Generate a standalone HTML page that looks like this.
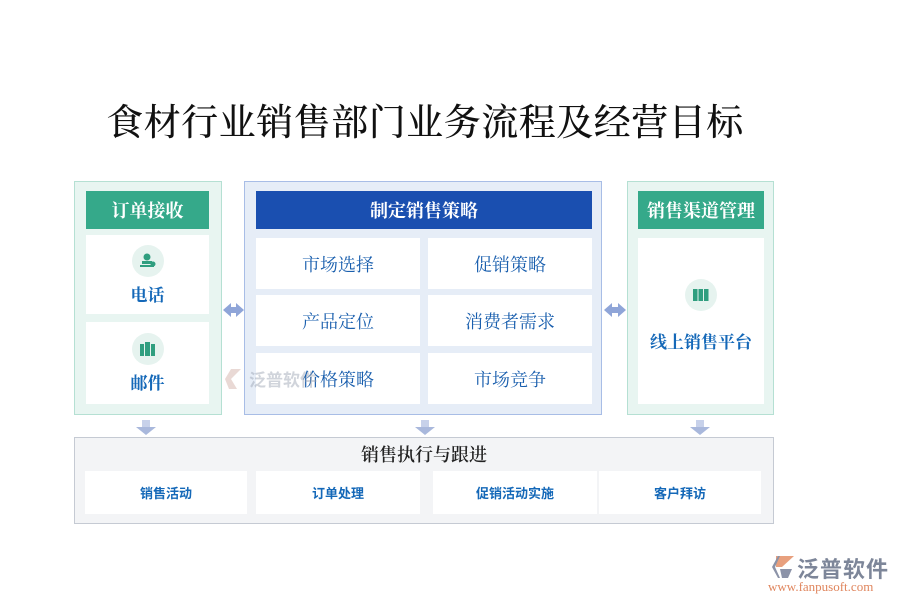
<!DOCTYPE html>
<html><head><meta charset="utf-8"><style>
*{margin:0;padding:0;box-sizing:border-box}
body{width:900px;height:600px;background:#fff;position:relative;font-family:"Liberation Sans","Noto Sans CJK SC",sans-serif;overflow:hidden}
.a{position:absolute}
.title{left:0;width:850px;top:92px;text-align:center;font-family:"Liberation Serif","Noto Serif CJK SC",serif;font-size:37px;color:#111;letter-spacing:0.5px;font-weight:500}
.gbox{background:#e8f5f1;border:1.5px solid #b5e0d3}
.bbox{background:#e6edf7;border:1.5px solid #a8bde6}
.gh{background:#35a98a;color:#fff;font-size:18px;font-weight:bold;display:flex;align-items:center;justify-content:center;font-family:"Liberation Serif","Noto Serif CJK SC",serif}
.bh{background:#1a4fb0;color:#fff;font-size:18px;font-weight:bold;display:flex;align-items:center;justify-content:center;font-family:"Liberation Serif","Noto Serif CJK SC",serif}
.card{background:#fff}
.cell{background:#fff;display:flex;align-items:center;justify-content:center;color:#1a5fae;font-size:18px;font-family:"Liberation Serif","Noto Serif CJK SC",serif}
.lbl{color:#1468b8;font-size:17px;font-weight:bold;text-align:center;width:100%;font-family:"Liberation Serif","Noto Serif CJK SC",serif}
.ic{width:32px;height:32px;border-radius:50%;background:#e6f3ef;left:50%;margin-left:-16px}
.bc{background:#fff;display:flex;align-items:center;justify-content:center;color:#1468b8;font-size:13px;font-weight:bold}
.dn{width:0;height:0;border-left:10px solid transparent;border-right:10px solid transparent;border-top:8px solid #a9b8dc}
.dns{width:8px;height:7px;background:#c7d1ea}
</style></head><body>
<div class="a title">食材行业销售部门业务流程及经营目标</div>

<div class="a gbox" style="left:74px;top:181px;width:148px;height:234px"></div>
<div class="a gh" style="left:86px;top:191px;width:123px;height:38px">订单接收</div>
<div class="a card" style="left:86px;top:235px;width:123px;height:79px"></div>
<div class="a ic" style="left:148px;top:245px"></div>
<svg class="a" style="left:138px;top:252px" width="20" height="18"><circle cx="9" cy="5" r="3.5" fill="#2f9e7f"/><rect x="4" y="9" width="10" height="3" fill="#2f9e7f"/><rect x="2" y="13" width="14" height="2" fill="#2f9e7f"/><circle cx="15" cy="12" r="2.5" fill="#2f9e7f"/></svg>
<div class="a lbl" style="left:86px;top:281px;width:123px">电话</div>
<div class="a card" style="left:86px;top:322px;width:123px;height:82px"></div>
<div class="a ic" style="left:148px;top:333px"></div>
<svg class="a" style="left:138px;top:340px" width="20" height="18"><rect x="2" y="4" width="4" height="12" fill="#2f9e7f"/><rect x="7" y="2" width="5" height="14" fill="#2f9e7f"/><rect x="13" y="4" width="4" height="12" fill="#2f9e7f"/></svg>
<div class="a lbl" style="left:86px;top:369px;width:123px">邮件</div>

<div class="a bbox" style="left:244px;top:181px;width:358px;height:234px"></div>
<div class="a bh" style="left:256px;top:191px;width:336px;height:38px">制定销售策略</div>
<div class="a cell" style="left:256px;top:238px;width:164px;height:51px">市场选择</div>
<div class="a cell" style="left:428px;top:238px;width:164px;height:51px">促销策略</div>
<div class="a cell" style="left:256px;top:295px;width:164px;height:51px">产品定位</div>
<div class="a cell" style="left:428px;top:295px;width:164px;height:51px">消费者需求</div>
<div class="a cell" style="left:256px;top:353px;width:164px;height:51px">价格策略</div>
<div class="a cell" style="left:428px;top:353px;width:164px;height:51px">市场竞争</div>

<div class="a gbox" style="left:627px;top:181px;width:147px;height:234px"></div>
<div class="a gh" style="left:638px;top:191px;width:126px;height:38px">销售渠道管理</div>
<div class="a card" style="left:638px;top:238px;width:126px;height:166px"></div>
<div class="a ic" style="left:701px;top:279px"></div>
<svg class="a" style="left:691px;top:287px" width="20" height="16"><rect x="2" y="2" width="4.5" height="12" fill="#2f9e7f"/><rect x="7.5" y="2" width="4.5" height="12" fill="#2f9e7f"/><rect x="13" y="2" width="4.5" height="12" fill="#2f9e7f"/></svg>
<div class="a lbl" style="left:638px;top:328px;width:126px">线上销售平台</div>

<svg class="a" style="left:222px;top:300px" width="23" height="20"><path d="M1 10 L9 3 L9 7 L14 7 L14 3 L22 10 L14 17 L14 13 L9 13 L9 17Z" fill="#8fa5d8"/></svg>
<svg class="a" style="left:603px;top:300px" width="24" height="20"><path d="M1 10 L9 3 L9 7 L15 7 L15 3 L23 10 L15 17 L15 13 L9 13 L9 17Z" fill="#8fa5d8"/></svg>

<div class="a dns" style="left:142px;top:420px"></div><div class="a dn" style="left:136px;top:427px"></div>
<div class="a dns" style="left:421px;top:420px"></div><div class="a dn" style="left:415px;top:427px"></div>
<div class="a dns" style="left:696px;top:420px"></div><div class="a dn" style="left:690px;top:427px"></div>

<div class="a" style="left:74px;top:437px;width:700px;height:87px;background:#f3f4f6;border:1.5px solid #c5cad3"></div>
<div class="a" style="left:74px;top:441px;width:700px;text-align:center;font-size:18px;color:#222;font-family:'Liberation Serif','Noto Serif CJK SC',serif;font-weight:600">销售执行与跟进</div>
<div class="a bc" style="left:85px;top:471px;width:162px;height:43px">销售活动</div>
<div class="a bc" style="left:256px;top:471px;width:164px;height:43px">订单处理</div>
<div class="a bc" style="left:433px;top:471px;width:164px;height:43px">促销活动实施</div>
<div class="a bc" style="left:599px;top:471px;width:162px;height:43px">客户拜访</div>

<div class="a" style="left:249px;top:366px;font-size:17px;color:rgba(150,160,175,.45);font-weight:bold">泛普软件</div>
<svg class="a" style="left:221px;top:367px" width="24" height="24"><path d="M4 12 L10 2 L20 2 L10 12 L16 22 L8 22Z" fill="rgba(200,160,150,.4)"/></svg>

<svg class="a" style="left:770px;top:554px" width="26" height="26"><path d="M6 2 L24 2 L12 13 L6 13Z" fill="#e8a07e"/><path d="M2 13 L8 2 L10 2 L5 13 L10 24 L8 24Z" fill="#8c93a8"/><path d="M10 15 L22 15 L18 24 L12 24Z" fill="#8c93a8"/></svg>
<div class="a" style="left:797px;top:552px;font-size:22px;color:#7d8699;font-weight:bold;letter-spacing:1px">泛普软件</div>
<div class="a" style="left:768px;top:579px;font-size:13px;color:#e0865e;font-family:'Liberation Serif',serif">www.fanpusoft.com</div>
</body></html>
